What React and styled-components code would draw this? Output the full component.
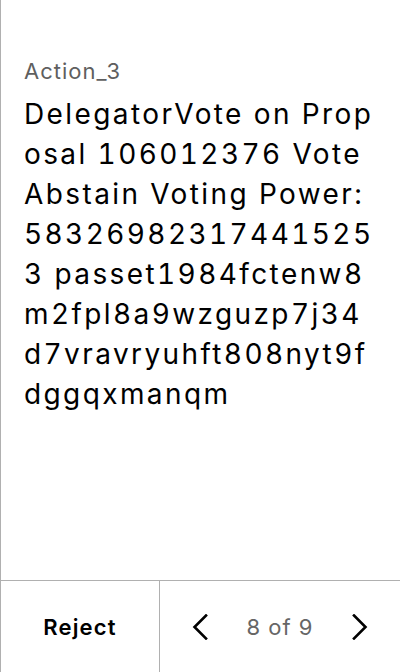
import React from "react";
import styled, { createGlobalStyle } from "styled-components";

const Global = createGlobalStyle`
  html, body { margin: 0; padding: 0; background: #fff; }
  body { font-family: Inter, "Noto Sans", sans-serif; }
  * { box-sizing: border-box; }
`;

const Screen = styled.div`
  width: 400px;
  height: 672px;
  display: flex;
  flex-direction: column;
  border-left: 1px solid #b0b0b0;
  background: #fff;
`;

const Content = styled.main`
  flex: 1;
  padding: 56px 24px 0 23px;
  display: flex;
  flex-direction: column;
  gap: 8px;
`;

const Label = styled.div`
  font-size: 22px;
  line-height: 30px;
  letter-spacing: 1px;
  color: #5f5f5f;
`;

const Body = styled.div`
  font-size: 28px;
  line-height: 40px;
  letter-spacing: 2.4px;
  font-feature-settings: "tnum" 1;
  color: #000;
  word-break: break-all;
`;

const Footer = styled.footer`
  height: 92px;
  display: grid;
  grid-template-columns: 159px 1fr;
  border-top: 1px solid #b0b0b0;
`;

const RejectButton = styled.button`
  border: none;
  border-right: 1px solid #b0b0b0;
  background: none;
  font-family: inherit;
  font-size: 22px;
  font-weight: 600;
  letter-spacing: 1.2px;
  color: #000;
  padding: 0;
  display: flex;
  align-items: center;
  justify-content: center;
`;

const Pager = styled.div`
  display: flex;
  align-items: center;
  justify-content: space-between;
  padding: 0 24px 0 24px;
`;

const Arrow = styled.button`
  border: none;
  background: none;
  padding: 0;
  width: 32px;
  height: 32px;
  display: flex;
  align-items: center;
  justify-content: center;
`;

const Count = styled.span`
  font-size: 22px;
  letter-spacing: 1px;
  color: #666;
`;

const Chevron = ({ dir }) => (
  <svg width="16" height="26" viewBox="0 0 16 26" fill="none">
    <path
      d={dir === "left" ? "M14 1.5 L2.5 13 L14 24.5" : "M2 1.5 L13.5 13 L2 24.5"}
      stroke="#000"
      strokeWidth="2.6"
      strokeLinecap="square"
    />
  </svg>
);

export default function App() {
  return (
    <>
      <Global />
      <Screen>
        <Content>
          <Label>Action_3</Label>
          <Body>
            DelegatorVote on Proposal 106012376 Vote Abstain Voting Power: 583269823174415253 passet1984fctenw8m2fpl8a9wzguzp7j34d7vravryuhft808nyt9fdggqxmanqm
          </Body>
        </Content>
        <Footer>
          <RejectButton>Reject</RejectButton>
          <Pager>
            <Arrow aria-label="previous"><Chevron dir="left" /></Arrow>
            <Count>8 of 9</Count>
            <Arrow aria-label="next"><Chevron dir="right" /></Arrow>
          </Pager>
        </Footer>
      </Screen>
    </>
  );
}
